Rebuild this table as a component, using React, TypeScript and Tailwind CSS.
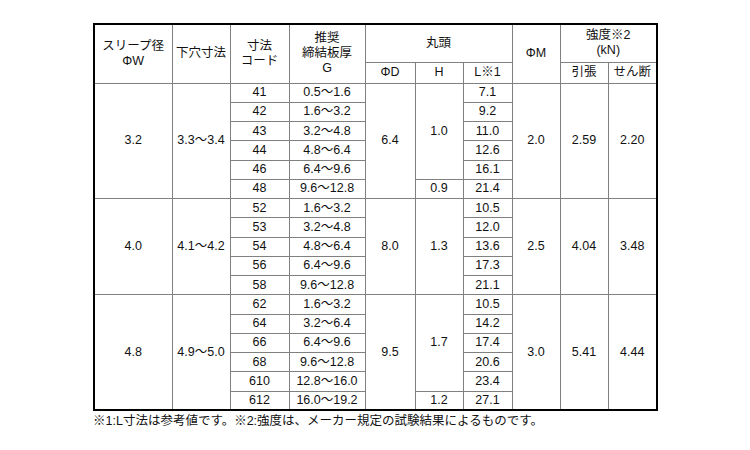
import React from 'react';

type Row = { code: string; g: string; h?: { v: string; span: number }; l: string };
type Group = { w: string; hole: string; d: string; m: string; t: string; s: string; rows: Row[] };

const groups: Group[] = [
  {
    w: '3.2', hole: '3.3～3.4', d: '6.4', m: '2.0', t: '2.59', s: '2.20',
    rows: [
      { code: '41', g: '0.5～1.6', h: { v: '1.0', span: 5 }, l: '7.1' },
      { code: '42', g: '1.6～3.2', l: '9.2' },
      { code: '43', g: '3.2～4.8', l: '11.0' },
      { code: '44', g: '4.8～6.4', l: '12.6' },
      { code: '46', g: '6.4～9.6', l: '16.1' },
      { code: '48', g: '9.6～12.8', h: { v: '0.9', span: 1 }, l: '21.4' },
    ],
  },
  {
    w: '4.0', hole: '4.1～4.2', d: '8.0', m: '2.5', t: '4.04', s: '3.48',
    rows: [
      { code: '52', g: '1.6～3.2', h: { v: '1.3', span: 5 }, l: '10.5' },
      { code: '53', g: '3.2～4.8', l: '12.0' },
      { code: '54', g: '4.8～6.4', l: '13.6' },
      { code: '56', g: '6.4～9.6', l: '17.3' },
      { code: '58', g: '9.6～12.8', l: '21.1' },
    ],
  },
  {
    w: '4.8', hole: '4.9～5.0', d: '9.5', m: '3.0', t: '5.41', s: '4.44',
    rows: [
      { code: '62', g: '1.6～3.2', h: { v: '1.7', span: 5 }, l: '10.5' },
      { code: '64', g: '3.2～6.4', l: '14.2' },
      { code: '66', g: '6.4～9.6', l: '17.4' },
      { code: '68', g: '9.6～12.8', l: '20.6' },
      { code: '610', g: '12.8～16.0', l: '23.4' },
      { code: '612', g: '16.0～19.2', h: { v: '1.2', span: 1 }, l: '27.1' },
    ],
  },
];

const cell = 'border border-[#808080] text-center align-middle p-0';

export default function App() {
  return (
    <div
      className="w-[750px] h-[450px] bg-white text-[#111] pt-[23px] pl-[93px]"
      style={{ fontFamily: '"Liberation Sans", "Noto Sans CJK JP", sans-serif' }}
    >
      <table className="border-collapse table-fixed border-2 border-black text-[12.5px] leading-[15px] w-[563px]">
        <colgroup>
          <col className="w-[78px]" />
          <col className="w-[58px]" />
          <col className="w-[59px]" />
          <col className="w-[76px]" />
          <col className="w-[50px]" />
          <col className="w-[48px]" />
          <col className="w-[49px]" />
          <col className="w-[48px]" />
          <col className="w-[48px]" />
          <col className="w-[49px]" />
        </colgroup>
        <thead>
          <tr className="h-[38px]">
            <th rowSpan={2} className={`${cell} font-normal`}>スリープ径<br />ΦW</th>
            <th rowSpan={2} className={`${cell} font-normal`}>下穴寸法</th>
            <th rowSpan={2} className={`${cell} font-normal`}>寸法<br />コード</th>
            <th rowSpan={2} className={`${cell} font-normal`}>推奨<br />締結板厚<br />G</th>
            <th colSpan={3} className={`${cell} font-normal`}>丸頭</th>
            <th rowSpan={2} className={`${cell} font-normal`}>ΦM</th>
            <th colSpan={2} className={`${cell} font-normal`}>強度※2<br />(kN)</th>
          </tr>
          <tr className="h-[21px]">
            <th className={`${cell} font-normal`}>ΦD</th>
            <th className={`${cell} font-normal`}>H</th>
            <th className={`${cell} font-normal`}>L※1</th>
            <th className={`${cell} font-normal`}>引張</th>
            <th className={`${cell} font-normal`}>せん断</th>
          </tr>
        </thead>
        <tbody>
          {groups.map((g) =>
            g.rows.map((r, i) => (
              <tr key={g.w + r.code} className="h-[19.25px]">
                {i === 0 && (
                  <>
                    <td rowSpan={g.rows.length} className={cell}>{g.w}</td>
                    <td rowSpan={g.rows.length} className={cell}>{g.hole}</td>
                  </>
                )}
                <td className={cell}>{r.code}</td>
                <td className={cell}>{r.g}</td>
                {i === 0 && <td rowSpan={g.rows.length} className={cell}>{g.d}</td>}
                {r.h && <td rowSpan={r.h.span} className={cell}>{r.h.v}</td>}
                <td className={cell}>{r.l}</td>
                {i === 0 && (
                  <>
                    <td rowSpan={g.rows.length} className={cell}>{g.m}</td>
                    <td rowSpan={g.rows.length} className={cell}>{g.t}</td>
                    <td rowSpan={g.rows.length} className={cell}>{g.s}</td>
                  </>
                )}
              </tr>
            ))
          )}
        </tbody>
      </table>
      <p className="text-[12.5px] leading-[16px] mt-[2px]">
        ※1:L寸法は参考値です。※2:強度は、メーカー規定の試験結果によるものです。
      </p>
    </div>
  );
}
